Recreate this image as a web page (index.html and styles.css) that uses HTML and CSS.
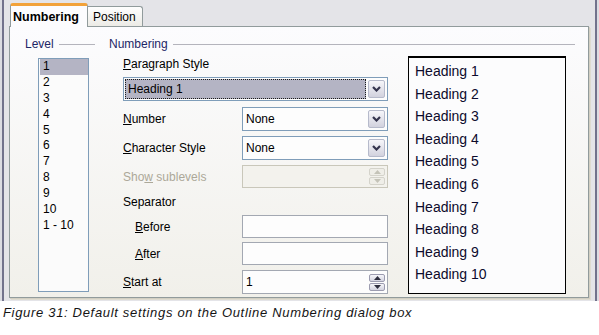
FILE: index.html
```html
<!DOCTYPE html>
<html>
<head>
<meta charset="utf-8">
<link rel="stylesheet" href="styles.css">
</head>
<body>
<div class="dialog">
  <div class="tabs">
    <div class="tab active">Numbering</div>
    <div class="tab">Position</div>
  </div>
  <div class="panel">
    <div class="level">
      <div class="group-title"><span>Level</span><i class="rule"></i></div>
      <div class="listbox">
        <div class="item selected">1</div>
        <div class="item">2</div>
        <div class="item">3</div>
        <div class="item">4</div>
        <div class="item">5</div>
        <div class="item">6</div>
        <div class="item">7</div>
        <div class="item">8</div>
        <div class="item">9</div>
        <div class="item">10</div>
        <div class="item">1 - 10</div>
      </div>
    </div>
    <div class="numbering">
      <div class="group-title"><span>Numbering</span><i class="rule"></i></div>
      <div class="num-body">
        <div class="controls">
          <div class="label lbl-pstyle"><u>P</u>aragraph Style</div>
          <div class="combo wide focused">
            <div class="field"><span>Heading 1</span></div>
            <div class="drop"><svg width="9" height="6" viewBox="0 0 9 6"><path d="M1 1 L4.5 4.5 L8 1" fill="none" stroke="#34344e" stroke-width="2.2"/></svg></div>
          </div>
          <div class="row r-number">
            <div class="label"><u>N</u>umber</div>
            <div class="combo">
              <div class="field">None</div>
              <div class="drop"><svg width="9" height="6" viewBox="0 0 9 6"><path d="M1 1 L4.5 4.5 L8 1" fill="none" stroke="#34344e" stroke-width="2.2"/></svg></div>
            </div>
          </div>
          <div class="row r-cs">
            <div class="label"><u>C</u>haracter Style</div>
            <div class="combo">
              <div class="field">None</div>
              <div class="drop"><svg width="9" height="6" viewBox="0 0 9 6"><path d="M1 1 L4.5 4.5 L8 1" fill="none" stroke="#34344e" stroke-width="2.2"/></svg></div>
            </div>
          </div>
          <div class="row r-ss">
            <div class="label disabled">Sho<u>w</u> sublevels</div>
            <div class="input spin disabled-box">
              <div class="field"></div>
              <div class="spinbtns">
                <div class="sb"><svg width="7" height="4" viewBox="0 0 7 4"><path d="M0 4 L3.5 0 L7 4 Z" fill="#c4c3b8"/></svg></div>
                <div class="sb"><svg width="7" height="4" viewBox="0 0 7 4"><path d="M0 0 L3.5 4 L7 0 Z" fill="#c4c3b8"/></svg></div>
              </div>
            </div>
          </div>
          <div class="label sep-label">Separator</div>
          <div class="row r-before">
            <div class="label indent"><u>B</u>efore</div>
            <div class="input"><div class="field"></div></div>
          </div>
          <div class="row r-after">
            <div class="label indent"><u>A</u>fter</div>
            <div class="input"><div class="field"></div></div>
          </div>
          <div class="row r-start">
            <div class="label"><u>S</u>tart at</div>
            <div class="input spin">
              <div class="field">1</div>
              <div class="spinbtns">
                <div class="sb active-sb"><svg width="7" height="4" viewBox="0 0 7 4"><path d="M0 4 L3.5 0 L7 4 Z" fill="#2e2e3e"/></svg></div>
                <div class="sb active-sb"><svg width="7" height="4" viewBox="0 0 7 4"><path d="M0 0 L3.5 4 L7 0 Z" fill="#2e2e3e"/></svg></div>
              </div>
            </div>
          </div>
        </div>
        <div class="preview">
          <div>Heading 1</div>
          <div>Heading 2</div>
          <div>Heading 3</div>
          <div>Heading 4</div>
          <div>Heading 5</div>
          <div>Heading 6</div>
          <div>Heading 7</div>
          <div>Heading 8</div>
          <div>Heading 9</div>
          <div>Heading 10</div>
        </div>
      </div>
    </div>
  </div>
</div>
<p class="caption">Figure 31: Default settings on the Outline Numbering dialog box</p>
</body>
</html>
```

FILE: styles.css
```css
html, body {
  margin: 0;
  padding: 0;
}
body {
  width: 599px;
  height: 335px;
  overflow: hidden;
  background: #ffffff;
  font-family: "Liberation Sans", Arial, sans-serif;
  font-size: 12px;
  color: #000;
}
.dialog {
  box-sizing: border-box;
  height: 301px;
  padding: 3px 0 0 9px;
  background:
    linear-gradient(to right, #dcdce2 0, #dcdce2 2px, #72728c 2px, #72728c 4px, transparent 4px, transparent 595px, #72728c 595px, #72728c 597px, #dcdce2 597px),
    #e4e4e8;
}
.tabs {
  display: flex;
  align-items: flex-start;
  height: 23px;
  padding-left: 1px;
}
.tab {
  box-sizing: border-box;
  position: relative;
  z-index: 1;
  white-space: nowrap;
}
.tab.active {
  width: 78px;
  height: 24px;
  border: 1px solid #919b9c;
  border-top: 3px solid #f2a23a;
  border-bottom: none;
  border-radius: 3px 3px 0 0;
  background: #fcfcfe;
  font-weight: bold;
  font-size: 12.5px;
  padding: 2px 0 0 2px;
  line-height: 18px;
}
.tab:not(.active) {
  width: 55px;
  height: 20px;
  margin-top: 3px;
  border: 1px solid #919b9c;
  border-bottom: none;
  border-left: none;
  border-radius: 0 3px 0 0;
  background: linear-gradient(#fefefe, #ecebe6);
  padding: 2px 0 0 5px;
  line-height: 17px;
}
.panel {
  box-sizing: border-box;
  width: 580px;
  height: 272px;
  border: 1px solid #919b9c;
  background: linear-gradient(#fcfcfe, #f1f0ea);
  box-shadow: 1px 1px 0 #d2cfc2, 2px 2px 0 #dedbd0;
  display: flex;
  padding: 10px 0 0 15px;
}
.group-title {
  display: flex;
  align-items: center;
  height: 14px;
  line-height: 14px;
  color: #1d2666;
  white-space: nowrap;
}
.rule {
  flex: 1;
  height: 1px;
  margin-left: 5px;
  background: #b4b4bc;
}
.level {
  width: 70px;
  margin-right: 14px;
}
.listbox {
  box-sizing: border-box;
  width: 51px;
  height: 234px;
  margin: 7px 0 0 13px;
  border: 1px solid #7f9db9;
  background: #fbfbfb;
  padding: 0 0 0 1px;
}
.item {
  height: 15.9px;
  line-height: 15.9px;
  padding-left: 3px;
}
.item.selected {
  background: #b4b4c4;
}
.numbering {
  width: 466px;
}
.num-body {
  display: flex;
  padding-left: 14px;
}
.controls {
  width: 265px;
}
.label {
  white-space: nowrap;
}
.label u {
  text-decoration: underline;
}
.lbl-pstyle {
  margin-top: 6px;
  height: 14px;
  line-height: 14px;
}
.sep-label {
  margin-top: 7px;
  height: 14px;
  line-height: 14px;
}
.row {
  display: flex;
  align-items: center;
}
.row > .label {
  width: 119px;
  flex: none;
}
.row > .label.indent {
  box-sizing: border-box;
  padding-left: 12px;
}
.label.disabled {
  color: #aca899;
}
.r-number { margin-top: 6px; }
.r-cs { margin-top: 5px; }
.r-ss { margin-top: 5px; }
.r-before { margin-top: 6px; }
.r-after { margin-top: 4px; }
.r-start { margin-top: 5px; }

.combo, .input {
  box-sizing: border-box;
  display: flex;
  align-items: center;
  height: 24px;
  width: 146px;
  border: 1px solid #7f9db9;
  background: #fdfdfd;
  padding: 0 2px 0 3px;
}
.combo.wide {
  width: 265px;
  margin-top: 6px;
  padding: 1px 2px 1px 1px;
}
.field {
  flex: 1;
  white-space: nowrap;
}
.combo.focused .field {
  box-sizing: border-box;
  height: 20px;
  line-height: 18px;
  background: #b4b4c4;
  border: 1px dotted #1a1a1a;
  padding-left: 2px;
  margin-right: 2px;
}
.drop {
  box-sizing: border-box;
  width: 17px;
  height: 18px;
  border: 1px solid #b6bacb;
  border-radius: 2px;
  background: linear-gradient(#f6f6fa, #d2d2de);
  display: flex;
  align-items: center;
  justify-content: center;
}
.input {
  height: 23px;
  border-color: #a3a8b2;
}
.r-start .input {
  height: 24px;
}
.input.disabled-box {
  border-color: #c9c7ba;
  background: #f3f2ed;
}
.spinbtns {
  display: flex;
  flex-direction: column;
  gap: 1px;
}
.sb {
  box-sizing: border-box;
  width: 16px;
  height: 8px;
  border: 1px solid #d4d3cb;
  border-radius: 2px;
  background: #efeee8;
  display: flex;
  align-items: center;
  justify-content: center;
}
.sb.active-sb {
  border-color: #9c9cb0;
  background: linear-gradient(#f6f6fa, #d4d4e0);
}
.preview {
  box-sizing: border-box;
  width: 158px;
  height: 238px;
  margin: 5px 0 0 20px;
  border: 1px solid #000;
  border-top-width: 2px;
  background: #fcfcfd;
  padding: 2px 0 0 6px;
  font-size: 14px;
  line-height: 22.6px;
  color: #0c0a2c;
}
.caption {
  margin: 4px 0 0 0;
  padding-left: 3px;
  height: 16px;
  line-height: 16px;
  font-size: 13px;
  font-style: italic;
  letter-spacing: 0.68px;
  color: #141414;
  white-space: nowrap;
}
```
